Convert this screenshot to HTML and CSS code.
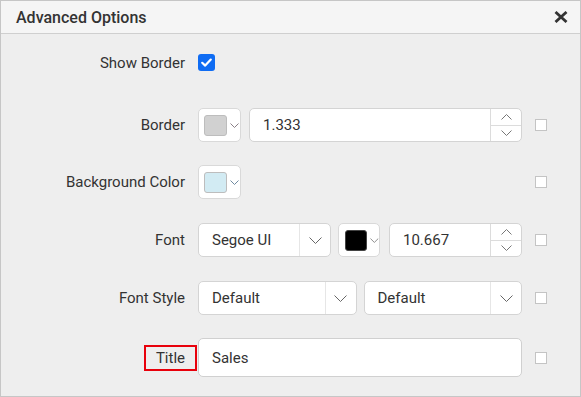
FILE: index.html
```html
<!DOCTYPE html>
<html lang="en">
<head>
  <meta charset="UTF-8">
  <title>Advanced Options</title>
  <link rel="stylesheet" href="styles.css">
</head>
<body>

<div class="dialog">
  <div class="dialog-header">
    <span class="dialog-title">Advanced Options</span>
    <button class="close-btn" aria-label="Close">
      <svg width="14" height="12" viewBox="0 0 14 12"><path d="M1.5 1 L12.5 11 M12.5 1 L1.5 11" stroke="#333" stroke-width="2.8" fill="none"/></svg>
    </button>
  </div>

  <div class="dialog-body">
    <div class="row row-first">
      <label class="row-label">Show Border</label>
      <div class="controls">
        <span class="check-blue">
          <svg width="17" height="17" viewBox="0 0 17 17"><path d="M4.2 8.8 L7.2 11.6 L12.8 5.6" stroke="#fff" stroke-width="2.2" fill="none" stroke-linecap="round" stroke-linejoin="round"/></svg>
        </span>
      </div>
    </div>

    <div class="row">
      <label class="row-label">Border</label>
      <div class="controls">
        <div class="color-pick"><span class="swatch swatch-gray"></span><svg class="mini-arrow" width="9" height="5" viewBox="0 0 9 5"><path d="M0.5 0.5 L4.5 4.5 L8.5 0.5" stroke="#8a7f86" fill="none"/></svg></div>
        <div class="numeric grow">
          <span class="value">1.333</span>
          <div class="spin">
            <span><svg width="11" height="6" viewBox="0 0 11 6"><path d="M0.5 5.5 L5.5 0.5 L10.5 5.5" stroke="#777" fill="none"/></svg></span>
            <span><svg width="11" height="6" viewBox="0 0 11 6"><path d="M0.5 0.5 L5.5 5.5 L10.5 0.5" stroke="#777" fill="none"/></svg></span>
          </div>
        </div>
      </div>
      <span class="check-small"></span>
    </div>

    <div class="row">
      <label class="row-label">Background Color</label>
      <div class="controls">
        <div class="color-pick"><span class="swatch swatch-blue"></span><svg class="mini-arrow" width="9" height="5" viewBox="0 0 9 5"><path d="M0.5 0.5 L4.5 4.5 L8.5 0.5" stroke="#6f8aa0" fill="none"/></svg></div>
      </div>
      <span class="check-small"></span>
    </div>

    <div class="row">
      <label class="row-label">Font</label>
      <div class="controls">
        <div class="dropdown font-name">
          <span class="value">Segoe UI</span>
          <span class="drop-arrow"><svg width="13" height="7" viewBox="0 0 13 7"><path d="M0.5 0.5 L6.5 6.5 L12.5 0.5" stroke="#666" fill="none"/></svg></span>
        </div>
        <div class="color-pick"><span class="swatch swatch-black"></span><svg class="mini-arrow" width="9" height="5" viewBox="0 0 9 5"><path d="M0.5 0.5 L4.5 4.5 L8.5 0.5" stroke="#8a8a8a" fill="none"/></svg></div>
        <div class="numeric grow">
          <span class="value">10.667</span>
          <div class="spin">
            <span><svg width="11" height="6" viewBox="0 0 11 6"><path d="M0.5 5.5 L5.5 0.5 L10.5 5.5" stroke="#777" fill="none"/></svg></span>
            <span><svg width="11" height="6" viewBox="0 0 11 6"><path d="M0.5 0.5 L5.5 5.5 L10.5 0.5" stroke="#777" fill="none"/></svg></span>
          </div>
        </div>
      </div>
      <span class="check-small"></span>
    </div>

    <div class="row">
      <label class="row-label">Font Style</label>
      <div class="controls">
        <div class="dropdown grow">
          <span class="value">Default</span>
          <span class="drop-arrow"><svg width="13" height="7" viewBox="0 0 13 7"><path d="M0.5 0.5 L6.5 6.5 L12.5 0.5" stroke="#666" fill="none"/></svg></span>
        </div>
        <div class="dropdown grow">
          <span class="value">Default</span>
          <span class="drop-arrow"><svg width="13" height="7" viewBox="0 0 13 7"><path d="M0.5 0.5 L6.5 6.5 L12.5 0.5" stroke="#666" fill="none"/></svg></span>
        </div>
      </div>
      <span class="check-small"></span>
    </div>

    <div class="row row-title">
      <label class="row-label"><span class="highlight">Title</span></label>
      <div class="controls">
        <div class="text-input grow"><span class="value">Sales</span></div>
      </div>
      <span class="check-small"></span>
    </div>
  </div>
</div>

</body>
</html>
```

FILE: styles.css
```css
* {
  box-sizing: border-box;
}

body {
  margin: 0;
  padding: 0;
  font-family: Roboto, "Liberation Sans", sans-serif;
  font-size: 15px;
  color: #333;
  background: #fff;
}

.dialog {
  width: 581px;
  height: 397px;
  border: 1px solid #c6c6c6;
  background: #eeeeee;
}

.dialog-header {
  height: 33px;
  background: #f5f5f5;
  border-bottom: 1px solid #cfcfcf;
  display: flex;
  align-items: center;
  justify-content: space-between;
  padding: 0 12px 0 15px;
}

.dialog-title {
  font-size: 16px;
  font-weight: 500;
  color: #333;
}

.close-btn {
  border: none;
  background: none;
  padding: 0;
  display: flex;
  cursor: pointer;
}

.dialog-body {
  display: flex;
  flex-direction: column;
}

.row {
  display: grid;
  grid-template-columns: 184px 324px 12px;
  column-gap: 13px;
  align-items: center;
  height: 34px;
  margin-top: 23px;
}

.row:nth-child(4),
.row:nth-child(5) {
  margin-top: 24px;
}

.row-first {
  height: 17px;
  margin-top: 20px;
}

.row-first + .row {
  margin-top: 37px;
}

.row-title {
  height: 39px;
}

.row-label {
  text-align: right;
  line-height: 16px;
}

.controls {
  display: flex;
  align-items: center;
  height: 100%;
}

.grow {
  flex: 1;
}

.check-blue {
  width: 17px;
  height: 17px;
  border-radius: 3px;
  background: #0f6cf3;
  display: flex;
}

.check-small {
  width: 12px;
  height: 12px;
  background: #fff;
  border: 1px solid #c4c4c4;
}

.color-pick {
  width: 43px;
  height: 34px;
  background: #fff;
  border: 1px solid #d9d9d9;
  border-radius: 5px;
  display: flex;
  align-items: center;
  padding-left: 5px;
  margin-right: 8px;
  flex-shrink: 0;
}

.swatch {
  width: 23px;
  height: 21px;
  border-radius: 3px;
  border: 1px solid #bdbdbd;
}

.swatch-gray {
  background: #d1d1d1;
}

.swatch-blue {
  background: #d2ebf3;
}

.swatch-black {
  background: #000;
  border-color: #444;
}

.mini-arrow {
  margin-left: 3px;
  margin-top: 1px;
}

.numeric,
.dropdown,
.text-input {
  height: 34px;
  background: #fff;
  border: 1px solid #d4d4d4;
  border-radius: 5px;
  display: flex;
  align-items: center;
}

.value {
  flex: 1;
  padding-left: 13px;
  line-height: 16px;
}

.spin {
  width: 31px;
  height: 100%;
  border-left: 1px solid #dcdcdc;
  display: flex;
  flex-direction: column;
}

.spin span {
  flex: 1;
  display: flex;
  align-items: center;
  justify-content: center;
}

.spin span + span {
  border-top: 1px solid #dcdcdc;
}

.dropdown .drop-arrow {
  width: 31px;
  height: 100%;
  border-left: 1px solid #e6e6e6;
  display: flex;
  align-items: center;
  justify-content: center;
}

.font-name {
  width: 133px;
  margin-right: 7px;
  flex-shrink: 0;
}

.font-name + .color-pick {
  width: 42px;
  margin-right: 9px;
  padding-left: 6px;
}

.dropdown.grow + .dropdown.grow {
  margin-left: 7px;
}

.text-input {
  height: 39px;
  border-color: #d0d0d0;
}

.highlight {
  display: inline-block;
  border: 2px solid #e8000b;
  padding: 3px 10px 3px 10px;
  margin-right: -12px;
}
```
